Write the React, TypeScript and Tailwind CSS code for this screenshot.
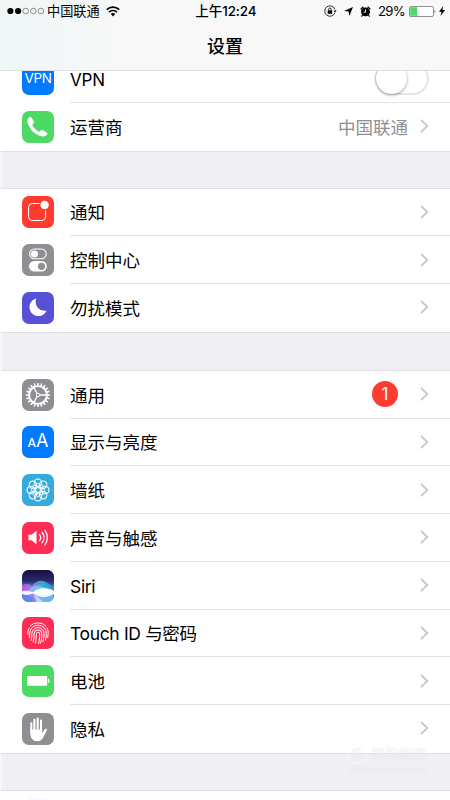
import type { ReactNode } from "react";
import { clsx } from "clsx";

interface Item {
  label: string;
  bg: string;
  icon: ReactNode;
  latin?: boolean;
  value?: string;
  badge?: number;
}

const ICON = "block h-8 w-8";

const PhoneIcon = (
  <svg viewBox="0 0 32 32" className={ICON} fill="#fff">
    <path d="M7 6.3c.9-.8 1.8-.7 2.4.1l2.3 3.5c.5.8.4 1.5-.1 2.2l-1 1.4c-.3.5-.2 1 .1 1.5 1.5 2.3 3.2 4 5.5 5.4.6.4 1.1.3 1.6-.1l1.3-1c.6-.5 1.3-.5 2 0l3.6 2.2c.9.6 1 1.4.3 2.2-1.6 1.8-3.8 2.3-6.4 1.4-6.1-2.2-10.9-6.8-12.8-12.6-.7-2.5-.5-4.6 1.2-6.2z" />
  </svg>
);

const NotificationIcon = (
  <svg viewBox="0 0 32 32" className={ICON} fill="none" stroke="#fff" strokeWidth="1">
    <path d="M17.5 7.5H10.3a3.7 3.7 0 0 0-3.7 3.7v9.6a3.7 3.7 0 0 0 3.7 3.7h9.6a3.7 3.7 0 0 0 3.7-3.7V14.5" />
    <circle cx="22.6" cy="9" r="4.2" fill="#fff" stroke="none" />
  </svg>
);

const ControlIcon = (
  <svg viewBox="0 0 32 32" className={ICON}>
    <rect x="7.6" y="5" width="16.6" height="9.8" rx="4.9" fill="none" stroke="#fff" strokeWidth="1.1" />
    <circle cx="12.5" cy="9.9" r="3.5" fill="#fff" />
    <rect x="7" y="17" width="17.8" height="10.6" rx="5.3" fill="#fff" />
    <circle cx="19.5" cy="22.3" r="3.6" fill="#8e8e93" />
  </svg>
);

const MoonIcon = (
  <svg viewBox="0 0 32 32" className={ICON} fill="#fff">
    <path d="M14.4 6.5a8.9 8.9 0 1 0 10.2 12.1A8.9 8.9 0 0 1 14.4 6.5z" />
  </svg>
);

const GearIcon = (
  <svg viewBox="0 0 32 32" className={ICON} fill="none" stroke="#fff">
    <circle cx="16" cy="16" r="8.9" strokeWidth="1.9" />
    {Array.from({ length: 20 }, (_, i) => (
      <path key={i} d="M16 6.8V3.9" strokeWidth="1.6" transform={`rotate(${i * 18} 16 16)`} />
    ))}
    <circle cx="16" cy="16" r="1.7" strokeWidth="1" />
    <path d="M17.6 16h7.2M15.2 14.5l-3.7-6.4M15.2 17.5l-3.7 6.4" strokeWidth="1.4" />
  </svg>
);

const DisplayIcon = (
  <span className="flex h-8 w-8 items-baseline justify-center pt-[6px] font-['Inter',sans-serif] leading-none text-white">
    <span className="text-[12px] font-medium">A</span>
    <span className="text-[18px]">A</span>
  </span>
);

const WallpaperIcon = (
  <svg viewBox="0 0 32 32" className={ICON} fill="none" stroke="#fff" strokeWidth="1.1">
    {Array.from({ length: 8 }, (_, i) => (
      <circle key={i} cx="16" cy="8.6" r="3.6" transform={`rotate(${i * 45} 16 16)`} />
    ))}
    {Array.from({ length: 8 }, (_, i) => (
      <path key={`p-${i}`} d="M16 13.6c-1.8-1-2.2-2.8 0-4.6 2.2 1.8 1.8 3.6 0 4.6z" strokeWidth=".8" transform={`rotate(${i * 45} 16 16)`} />
    ))}
    <circle cx="16" cy="16" r="2.4" strokeWidth=".9" />
  </svg>
);

const SoundIcon = (
  <svg viewBox="0 0 32 32" className={ICON} fill="none" stroke="#fff" strokeWidth="1.3" strokeLinecap="round">
    <path d="M6.5 12.7h3.1l4.9-3.9v13.4l-4.9-3.9H6.5z" fill="#fff" stroke="none" />
    <path d="M17.6 12.6a5 5 0 0 1 0 6M20.2 10.5a8.6 8.6 0 0 1 0 10.2M22.9 8.3a12 12 0 0 1 0 14.6" />
  </svg>
);

const SiriIcon = (
  <svg viewBox="0 0 32 32" className={ICON}>
    <defs>
      <linearGradient id="siri-sky" x1="0" y1="0" x2="0" y2="1">
        <stop offset="0" stopColor="#170e3a" />
        <stop offset=".35" stopColor="#2b2a72" />
        <stop offset=".6" stopColor="#49a5dc" />
        <stop offset="1" stopColor="#86bdf2" />
      </linearGradient>
      <linearGradient id="siri-wave" x1="0" y1="0" x2="1" y2="0">
        <stop offset="0" stopColor="#d94be4" />
        <stop offset=".35" stopColor="#a878ee" />
        <stop offset=".6" stopColor="#36bdd0" />
        <stop offset="1" stopColor="#2f8ed6" />
      </linearGradient>
      <filter id="siri-soft">
        <feGaussianBlur stdDeviation="0.6" />
      </filter>
    </defs>
    <path d="M0 0h32v32H0z" fill="url(#siri-sky)" />
    <path d="M-1 16c5-3 9-2 11 0 3-4 7-6 11-5 5 1 8 5 12 8v14H-1z" fill="url(#siri-wave)" opacity=".85" filter="url(#siri-soft)" />
    <path d="M6 21c2-4 6-6 11-5 6 1 10 3 16 6v2H6z" fill="#8fd9f2" opacity=".6" filter="url(#siri-soft)" />
    <path d="M-1 24c6 0 11 2 14 9H-1z" fill="#4a8df0" opacity=".8" filter="url(#siri-soft)" />
    <path d="M13 26h20v7H16z" fill="#7fb6f5" opacity=".8" filter="url(#siri-soft)" />
    <path d="M11 24c5 3 8 5 10 9h-6c-1-4-3-6-4-9z" fill="#dfe9ff" opacity=".7" filter="url(#siri-soft)" />
    <path d="M-1 21.6c4-1.6 8-.6 12 .6 5-4.8 15-5.4 22-.6v2c-7 4.8-17 4.2-22-.4-4 2.2-8 2.2-12 .4z" fill="#fff" opacity=".95" filter="url(#siri-soft)" />
  </svg>
);

const TouchIcon = (
  <svg viewBox="0 0 32 32" className={ICON} fill="none" stroke="#fff" strokeWidth="1" strokeLinecap="round">
    <path d="M8.2 9a10.8 10.8 0 0 1 15.6 0" />
    <path d="M5.9 17.5c-.4-2.4.1-4.7 1.2-6.5M24.9 11c1.1 1.8 1.6 4 1.2 6.5l-.4 3" />
    <path d="M7.4 20.8c.3-1.6.2-3 .3-4.4a8.3 8.3 0 0 1 16.6 0c0 2.5-.3 4.7-.9 6.7" />
    <path d="M9.2 23.2c.7-2.4.6-4.5.7-6.5a6.1 6.1 0 0 1 12.2 0c0 3.1-.4 5.7-1.2 8.1" />
    <path d="M11.2 24.9c.8-2.7.8-5.3.9-8.1a3.9 3.9 0 0 1 7.8 0c0 3.6-.4 6.5-1.4 9.4" />
    <path d="M13.5 26c.7-3 .8-6 .8-9.1a1.7 1.7 0 0 1 3.4 0c0 3.6-.3 6.7-1.2 9.7" />
  </svg>
);

const BatteryIcon = (
  <svg viewBox="0 0 32 32" className={ICON} fill="#fff">
    <rect x="5" y="11" width="20.2" height="9.8" rx=".8" />
    <path d="M26 13.8c1.2.3 1.5 1.2 1.5 2.1s-.3 1.8-1.5 2.1z" />
  </svg>
);

const HandIcon = (
  <svg viewBox="0 0 32 32" className={ICON} fill="none" stroke="#fff" strokeLinecap="round">
    <path d="M9.3 10.4v8M12.4 6.7v10M15.7 5.6v11M19 7.6v10" strokeWidth="2.1" />
    <path d="M8.3 16.5H20v3.4c1.1-.6 1.9-2.9 3.1-3.8.9-.6 2.2-.2 1.8.9l-3.1 6.5c-1.5 3.2-3.4 4.8-6.6 4.8-4.2 0-6.9-3.2-6.9-8z" fill="#fff" stroke="none" />
  </svg>
);

const CONNECTION: Item[] = [{ label: "运营商", bg: "bg-[#4cd964]", icon: PhoneIcon, value: "中国联通" }];

const ALERTS: Item[] = [
  { label: "通知", bg: "bg-[#ff3b30]", icon: NotificationIcon },
  { label: "控制中心", bg: "bg-[#8e8e93]", icon: ControlIcon },
  { label: "勿扰模式", bg: "bg-[#5651d5]", icon: MoonIcon },
];

const DEVICE: Item[] = [
  { label: "通用", bg: "bg-[#8e8e93]", icon: GearIcon, badge: 1 },
  { label: "显示与亮度", bg: "bg-[#007aff]", icon: DisplayIcon },
  { label: "墙纸", bg: "bg-[#35aadc]", icon: WallpaperIcon },
  { label: "声音与触感", bg: "bg-[#ff2d55]", icon: SoundIcon },
  { label: "Siri", bg: "bg-[#292568]", icon: SiriIcon, latin: true },
  { label: "Touch ID 与密码", bg: "bg-[#ff2d55]", icon: TouchIcon, latin: true },
  { label: "电池", bg: "bg-[#4cd964]", icon: BatteryIcon },
  { label: "隐私", bg: "bg-[#8e8e93]", icon: HandIcon },
];

function Chevron() {
  return (
    <svg viewBox="0 0 9 14" className="h-3.5 w-[9px]" fill="none" stroke="#c4c4c9" strokeWidth="1.8">
      <path d="M1 .8 7.3 7 1 13.2" />
    </svg>
  );
}

function Row({ item, last }: { item: Item; last: boolean }) {
  return (
    <li className="flex h-[47.75px] items-center pl-[22px]">
      <span className={clsx("h-8 w-8 shrink-0 overflow-hidden rounded-[7px]", item.bg)}>{item.icon}</span>
      <div className={clsx("ml-4 flex h-full flex-1 items-center border-b pr-[21px]", last ? "border-transparent" : "border-[#e3e3e6]")}>
        <span className={clsx("flex-1 pt-[3px] text-[17.5px] leading-6 whitespace-nowrap", item.latin && "tracking-[-0.35px]")}>
          {item.label}
        </span>
        {item.value && <span className="mr-3 pt-[3px] text-[17.5px] leading-6 text-[#8e8e93]">{item.value}</span>}
        {item.badge && (
          <span className="mr-[22px] flex h-[26px] w-[26px] items-center justify-center rounded-full bg-[#ff3b30] text-[17px] leading-none text-white">
            {item.badge}
          </span>
        )}
        <Chevron />
      </div>
    </li>
  );
}

function Group({ items }: { items: Item[] }) {
  return (
    <ul className="shrink-0 bg-white">
      {items.map((item, i) => (
        <Row key={item.label} item={item} last={i === items.length - 1} />
      ))}
    </ul>
  );
}

function Gap({ className, children }: { className: string; children?: ReactNode }) {
  return (
    <div className={clsx("relative shrink-0 border-y border-l-2 border-y-[#dfdfe3] border-l-[#f7f7f9] bg-[#efeff4]", className)}>
      {children}
    </div>
  );
}

function StatusBar() {
  return (
    <div className="grid h-[23px] grid-cols-3 items-center pr-[5px] pl-[7px] text-[13.5px] leading-none">
      <div className="flex items-center">
        <svg viewBox="0 0 38 8" className="h-2 w-[38px]" fill="none" stroke="#666" strokeWidth=".7">
          <circle cx="3.4" cy="4" r="3.1" fill="#000" stroke="none" />
          <circle cx="11.1" cy="4" r="3.1" fill="#000" stroke="none" />
          <circle cx="18.7" cy="4" r="2.8" />
          <circle cx="26.3" cy="4" r="2.8" />
          <circle cx="33.9" cy="4" r="2.8" />
        </svg>
        <span className="ml-[2px] text-[13.2px]">中国联通</span>
        <svg viewBox="0 0 14 11" className="ml-[6px] h-[11px] w-3.5" fill="none" stroke="#000" strokeWidth="1.7">
          <path d="M.8 3.7a8.9 8.9 0 0 1 12.4 0M3.1 6.1a5.5 5.5 0 0 1 7.8 0" />
          <path d="M4.7 8.1a3.3 3.3 0 0 1 4.6 0L7 10.6z" fill="#000" stroke="none" />
        </svg>
      </div>
      <div className="text-center font-medium tracking-[-0.1px] whitespace-nowrap">上午12:24</div>
      <div className="flex items-center justify-end">
        <svg viewBox="0 0 13 12" className="h-3 w-[13px]" fill="none" stroke="#000" strokeWidth=".8">
          <path d="M10.9 4.4a5.2 5.2 0 1 0 0 3.3" />
          <path d="M9.4 5.4h3.2L11 7.6z" fill="#000" stroke="none" />
          <rect x="3.7" y="5.3" width="4.4" height="3.5" fill="#000" stroke="none" />
          <path d="M4.6 5.5V4.3a1.3 1.3 0 0 1 2.6 0v1.2" />
        </svg>
        <svg viewBox="0 0 10 10" className="ml-[7px] h-[9px] w-[9px]">
          <path d="M10 0 5.9 9.9 5.1 5 0 4.4z" />
        </svg>
        <svg viewBox="0 0 12 12" className="ml-[7px] h-[11px] w-[11px]">
          <path d="M.2 3.2 3.2.4l1 1L1.2 4.2zM11.8 3.2 8.8.4l-1 1 3 2.8z" />
          <circle cx="6" cy="6.4" r="4.9" />
          <path d="M6 3.6v3.3H3.8" fill="none" stroke="#fff" strokeWidth=".9" />
          <path d="m2.8 9.8-1.2 1.7M9.2 9.8l1.2 1.7" stroke="#000" strokeWidth="1.3" />
        </svg>
        <span className="ml-[7px] text-[13.2px] tracking-[-0.7px]">29%</span>
        <svg viewBox="0 0 27 11" className="ml-1 h-[11px] w-[27px]">
          <rect x=".5" y=".5" width="24" height="10" rx="1.5" fill="#fff" stroke="#777" strokeWidth=".8" />
          <path d="M1.2 1.2h6.9v8.6H1.2z" fill="#4cd964" />
          <path d="M25.6 3.8c1 .4 1 3 0 3.4z" fill="#555" />
        </svg>
        <svg viewBox="0 0 6 10" className="ml-[3px] h-[10px] w-1.5">
          <path d="M4.2 0 0 5.8h2.5L1.5 10 6 4.1H3.4z" />
        </svg>
      </div>
    </div>
  );
}

function Watermark() {
  return (
    <div className="absolute -top-[10px] left-[344px] flex w-[82px] flex-col items-center text-white/60 [text-shadow:0_0_1px_rgba(0,0,0,0.1)]">
      <div className="flex items-center gap-1">
        <span className="flex h-5 w-5 items-center justify-center rounded-full border border-white/70 text-[15px] leading-none font-bold">S</span>
        <span className="text-[14px] leading-5 font-medium whitespace-nowrap">搜狗指南</span>
      </div>
      <span className="text-[9px] leading-3">zhinan.sogou.com</span>
    </div>
  );
}

export default function App() {
  return (
    <div className="flex h-[800px] w-[450px] flex-col overflow-hidden bg-white font-['Inter','Noto_Sans_CJK_SC',sans-serif] text-black">
      <header className="h-[71px] shrink-0 border-b border-[#dfdfe2] bg-linear-to-r from-[#f0f6f6] via-[#f8f8f8] via-30% to-[#f8f8f8]">
        <StatusBar />
        <h1 className="pt-[10px] text-center text-[18px] leading-[27px] font-medium">设置</h1>
      </header>

      {/* VPN row, scrolled partly under the header */}
      <div className="flex h-[31.8px] shrink-0 items-end overflow-hidden pl-[22px]">
        <div className="flex h-[47.7px] flex-1 items-center">
          <span className="flex h-8 w-8 items-center justify-center rounded-[7px] bg-[#007aff] text-[13.5px] leading-none tracking-[-0.3px] text-white">
            VPN
          </span>
          <div className="ml-4 flex h-full flex-1 items-center border-b border-[#e3e3e6] pr-[21px]">
            <span className="flex-1 pt-[4px] text-[17px] leading-none tracking-[-0.2px]">VPN</span>
            <span className="flex h-[33px] w-[54px] items-center rounded-full border-2 border-[#e5e5e5]">
              <span className="-ml-px h-[31px] w-[31px] rounded-full bg-white shadow-[0_1px_3px_rgba(0,0,0,0.4)]" />
            </span>
          </div>
        </div>
      </div>

      <Group items={CONNECTION} />
      <Gap className="h-[38px]" />
      <Group items={ALERTS} />
      <Gap className="h-[39px]" />
      <Group items={DEVICE} />
      <Gap className="h-[38.5px]">
        <Watermark />
      </Gap>
      <div className="flex-1 bg-white pt-1.5 pl-[25px]">
        <div className="h-3 w-[25px] rounded-t-lg bg-[#fafafa]" />
      </div>
    </div>
  );
}
